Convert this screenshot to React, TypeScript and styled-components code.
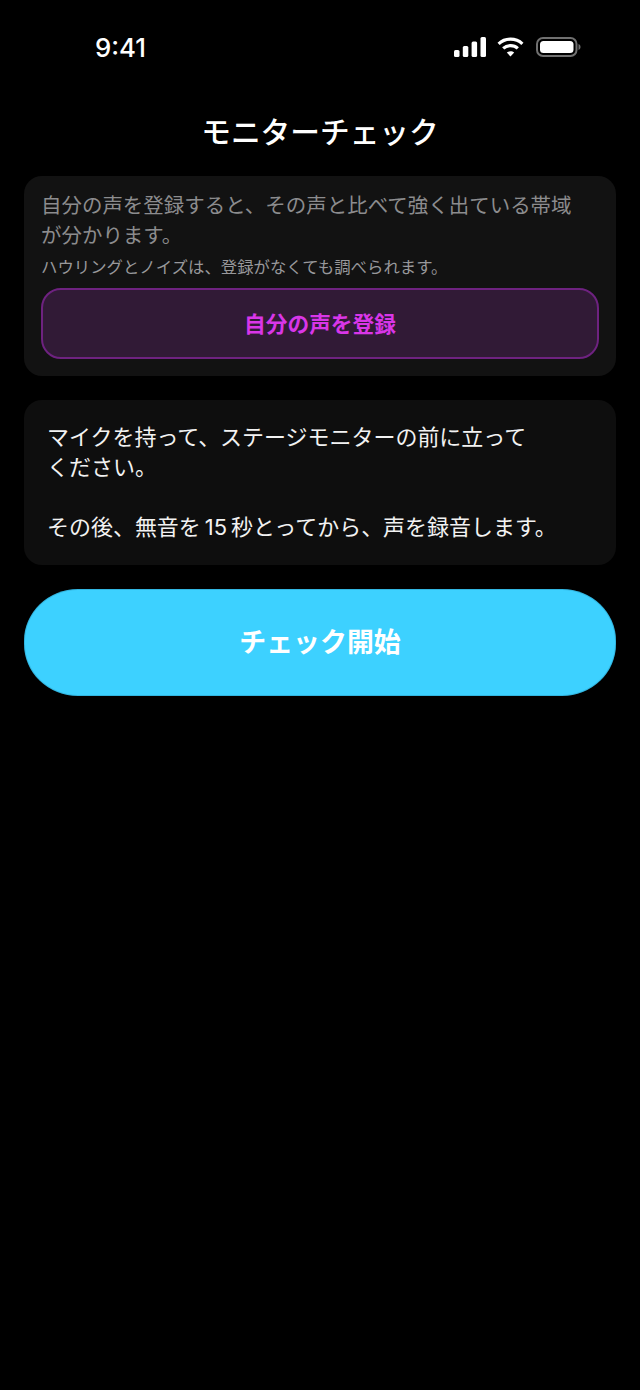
import React from 'react';
import styled, { createGlobalStyle } from 'styled-components';

const GlobalStyle = createGlobalStyle`
  html, body {
    margin: 0;
    padding: 0;
    background: #000;
  }
  body {
    font-family: 'Inter', 'Noto Sans CJK JP', sans-serif;
    -webkit-font-smoothing: antialiased;
  }
`;

const Screen = styled.div`
  width: 640px;
  height: 1390px;
  background: #000;
  color: #fff;
  overflow: hidden;
`;

const StatusBar = styled.div`
  height: 94px;
  box-sizing: border-box;
  padding: 33px 59px 0 95px;
  display: flex;
  justify-content: space-between;
  align-items: flex-start;
`;

const Time = styled.span`
  font-family: 'Inter', 'Liberation Sans', sans-serif;
  font-size: 25.8px;
  line-height: 30px;
  font-weight: 500;
`;

const StatusIcons = styled.div`
  display: flex;
  align-items: center;
  gap: 11px;
  padding-top: 4px;
  & > svg:last-child {
    margin-left: 1px;
  }
`;

const Title = styled.h1`
  margin: 0;
  height: 82px;
  padding-top: 16px;
  box-sizing: border-box;
  text-align: center;
  font-size: 29.7px;
  line-height: 44px;
  font-weight: 500;
`;

const Content = styled.div`
  padding: 0 24px;
  display: flex;
  flex-direction: column;
  gap: 24px;
`;

const Card = styled.section`
  background: ${p => p.$bg};
  border-radius: 18px;
  box-sizing: border-box;
`;

const RegisterCard = styled(Card)`
  height: 200px;
  padding: 15px 17px 17px;
`;

const Lead = styled.p`
  margin: 0;
  width: 540px;
  color: #8c8c8e;
  font-size: 20.48px;
  line-height: 30px;
`;

const Note = styled.p`
  margin: 5px 0 0;
  color: #98989b;
  font-size: 16.4px;
  line-height: 22px;
  white-space: nowrap;
`;

const RegisterButton = styled.button`
  display: block;
  width: 100%;
  height: 71px;
  margin-top: 10px;
  padding: 0 0 2px;
  box-sizing: border-box;
  border: 2px solid #6e2280;
  border-radius: 20px;
  background: #311a36;
  color: #d936e8;
  font: inherit;
  font-size: 21.7px;
  font-weight: 700;
`;

const GuideCard = styled(Card)`
  height: 165px;
  padding: 22px 23px 0;
`;

const Guide = styled.p`
  margin: 0;
  width: 544px;
  color: #f2f2f2;
  font-size: 21.97px;
  line-height: 30px;
  white-space: nowrap;
`;

const StartButton = styled.button`
  display: block;
  width: 100%;
  height: 107px;
  padding: 0 0 4px;
  border: none;
  border-radius: 54px / 52px;
  background: #3dd1ff;
  box-shadow: inset 0 0 0 1px rgba(0, 60, 90, 0.18);
  color: #fff;
  font: inherit;
  font-size: 26.9px;
  font-weight: 700;
`;

const App: React.FC = () => (
  <>
    <GlobalStyle />
    <Screen>
      <StatusBar>
        <Time>9:41</Time>
        <StatusIcons>
          <svg width="32" height="20" viewBox="0 0 32 20" fill="#fff">
            <rect x="0" y="13" width="5.500" height="7" rx="1.500" />
            <rect x="8.800" y="9" width="5.500" height="11" rx="1.500" />
            <rect x="17.600" y="4.500" width="5.500" height="15.500" rx="1.500" />
            <rect x="26.500" y="0" width="5.500" height="20" rx="1.500" />
          </svg>
          <svg width="27" height="20" viewBox="0 0 27 20" fill="none" stroke="#fff" strokeWidth="3.200">
            <path d="M1.600 6.800C8.200 .6 18.800 .6 25.400 6.800" />
            <path d="M6.200 11.400c4-3.800 10.600-3.800 14.600 0" />
            <path d="M13.500 19.600 9.800 15.600c2-1.900 5.400-1.900 7.400 0z" fill="#fff" stroke="none" />
          </svg>
          <svg width="45" height="20" viewBox="0 0 45 20" fill="none">
            <rect x="1" y="1" width="39.500" height="18" rx="6" stroke="#707070" strokeWidth="2" />
            <rect x="4" y="4" width="33.500" height="12" rx="3.500" fill="#fff" />
            <path d="M42.500 7v6c1.200-.4 2-1.600 2-3s-.8-2.600-2-3z" fill="#707070" />
          </svg>
        </StatusIcons>
      </StatusBar>
      <Title>モニターチェック</Title>
      <Content>
        <RegisterCard $bg="#121212">
          <Lead>自分の声を登録すると、その声と比べて強く出ている帯域が分かります。</Lead>
          <Note>ハウリングとノイズは、登録がなくても調べられます。</Note>
          <RegisterButton>自分の声を登録</RegisterButton>
        </RegisterCard>
        <GuideCard $bg="#0e0e0e">
          <Guide>
            マイクを持って、ステージモニターの前に立って
            <br />
            ください。
            <br />
            <br />
            その後、無音を{'\u2009'}15{'\u2009'}秒とってから、声を録音します。
          </Guide>
        </GuideCard>
        <StartButton>チェック開始</StartButton>
      </Content>
    </Screen>
  </>
);

export default App;
